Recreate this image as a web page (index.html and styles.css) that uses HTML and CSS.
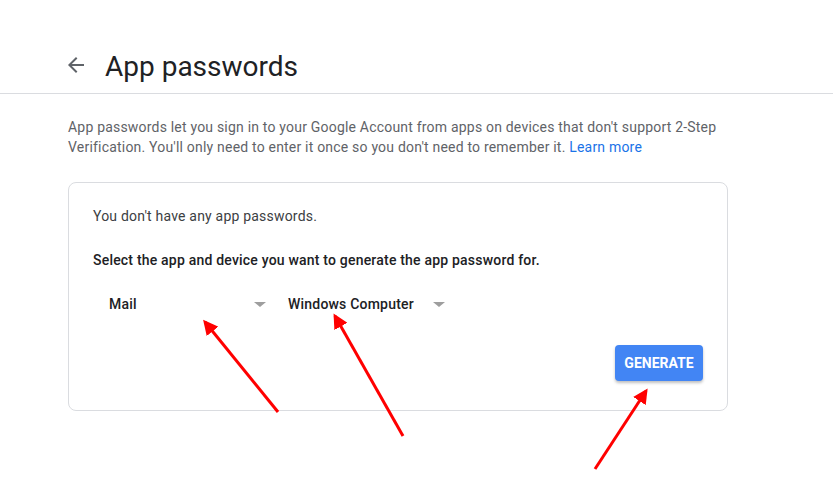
FILE: index.html
```html
<!DOCTYPE html>
<html lang="en">
<head>
  <meta charset="UTF-8">
  <meta name="viewport" content="width=device-width, initial-scale=1.0">
  <title>App passwords</title>
  <link rel="stylesheet" href="styles.css">
</head>
<body>
  <header class="top-bar">
    <a class="back-link" href="#" aria-label="Back">
      <svg width="24" height="24" viewBox="0 0 24 24"><path d="M20 11H7.83l5.59-5.59L12 4l-8 8 8 8 1.41-1.41L7.83 13H20v-2z" fill="#5f6368"/></svg>
    </a>
    <h1>App passwords</h1>
  </header>

  <main class="content">
    <p class="intro">App passwords let you sign in to your Google Account from apps on devices that don't support 2-Step Verification. You'll only need to enter it once so you don't need to remember it. <a href="#">Learn more</a></p>

    <div class="card">
      <p class="empty">You don't have any app passwords.</p>
      <p class="instruction">Select the app and device you want to generate the app password for.</p>

      <div class="selects">
        <div class="dropdown">
          <span>Mail</span>
          <span class="caret"></span>
        </div>
        <div class="dropdown">
          <span>Windows Computer</span>
          <span class="caret"></span>
        </div>
      </div>

      <div class="actions">
        <button class="generate">Generate</button>
      </div>
    </div>
  </main>

  <!-- Annotation arrows -->
  <svg class="annotations" width="833" height="486" viewBox="0 0 833 486">
    <defs>
      <marker id="head" viewBox="0 0 10 10" refX="8" refY="5" markerWidth="5" markerHeight="5" orient="auto">
        <path d="M0 0L10 5L0 10z" fill="#ff0000"/>
      </marker>
    </defs>
    <line x1="278" y1="412" x2="205" y2="322" stroke="#ff0000" stroke-width="3" marker-end="url(#head)"/>
    <line x1="403" y1="436" x2="335" y2="316" stroke="#ff0000" stroke-width="3" marker-end="url(#head)"/>
    <line x1="595" y1="469" x2="646" y2="391" stroke="#ff0000" stroke-width="3" marker-end="url(#head)"/>
  </svg>
</body>
</html>
```

FILE: styles.css
```css
body {
  margin: 0;
  font-family: Roboto, Arial, sans-serif;
  background-color: #fff;
  color: #202124;
}

/* Header */
.top-bar {
  display: flex;
  align-items: center;
  height: 48px;
  padding: 42px 0 3px 64px;
  border-bottom: 1px solid #dadce0;
}

.back-link {
  display: flex;
  width: 24px;
  height: 24px;
  margin-top: -2px;
}

.top-bar h1 {
  margin: 0 0 0 17px;
  font-size: 28px;
  font-weight: 400;
  color: #202124;
}

/* Content */
.content {
  padding: 0 68px;
  width: 660px;
}

.intro {
  margin: 23px 0 25px;
  font-size: 14px;
  line-height: 20px;
  letter-spacing: 0.2px;
  color: #5f6368;
}

.intro a {
  color: #1a73e8;
  text-decoration: none;
}

.card {
  display: flex;
  flex-direction: column;
  padding: 23px 24px 29px;
  border: 1px solid #dadce0;
  border-radius: 8px;
}

.card p {
  margin: 0;
  font-size: 14px;
  line-height: 20px;
  letter-spacing: 0.2px;
}

.empty {
  color: #3c4043;
}

.instruction {
  margin-top: 24px !important;
  font-weight: 500;
  color: #202124;
}

.selects {
  display: flex;
  margin-top: 16px;
}

.dropdown {
  box-sizing: border-box;
  display: flex;
  align-items: center;
  justify-content: space-between;
  width: 179px;
  height: 36px;
  padding: 0 6px 0 16px;
  font-size: 14px;
  font-weight: 500;
  letter-spacing: 0.2px;
  color: #202124;
}

.caret {
  width: 0;
  height: 0;
  margin-top: 1px;
  border-left: 6px solid transparent;
  border-right: 6px solid transparent;
  border-top: 5px solid #9e9e9e;
}

.actions {
  display: flex;
  justify-content: flex-end;
  margin-top: 23px;
}

.generate {
  width: 88px;
  height: 36px;
  padding: 0;
  border: none;
  border-radius: 4px;
  background-color: #4285f4;
  color: #fff;
  font-family: Roboto, Arial, sans-serif;
  font-size: 14px;
  font-weight: 700;
  text-transform: uppercase;
  box-shadow: 0 2px 3px rgba(0, 0, 0, 0.25);
  cursor: pointer;
}

/* Overlay */
.annotations {
  position: absolute;
  top: 0;
  left: 0;
  pointer-events: none;
}
```
